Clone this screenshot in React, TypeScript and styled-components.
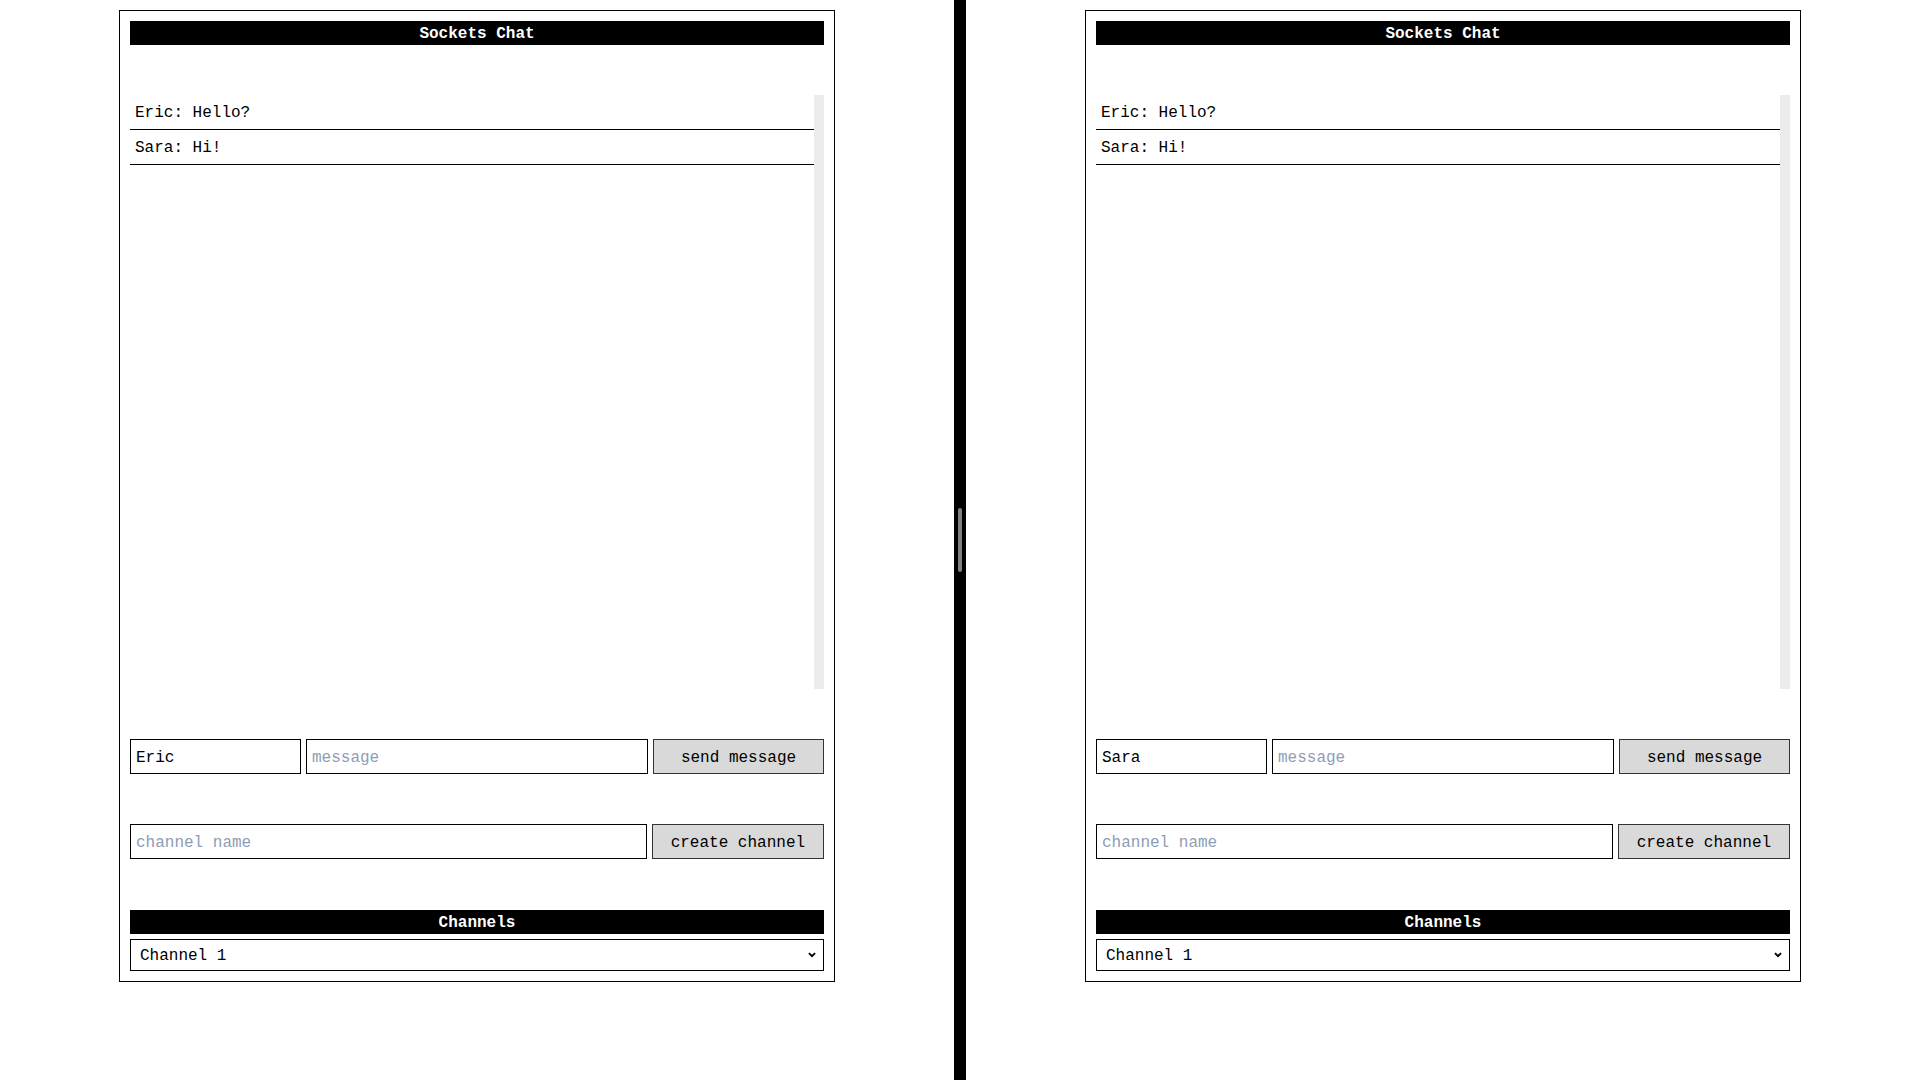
import React, { useState } from 'react';
import styled, { createGlobalStyle } from 'styled-components';

type Message = { user: string; text: string };

const messages: Message[] = [
  { user: 'Eric', text: 'Hello?' },
  { user: 'Sara', text: 'Hi!' },
];

const ChatPanel = ({ name }: { name: string }): JSX.Element => {
  const [message, setMessage] = useState('');
  const [channel, setChannel] = useState('');

  return (
    <Panel>
      <Title>Sockets Chat</Title>
      <MessageArea>
        <MessageList>
          {messages.map((m, i) => (
            <MessageRow key={i}>{`${m.user}: ${m.text}`}</MessageRow>
          ))}
        </MessageList>
        <ScrollTrack />
      </MessageArea>
      <SendRow>
        <TextInput defaultValue={name} />
        <TextInput
          placeholder="message"
          value={message}
          onChange={(e) => setMessage(e.target.value)}
        />
        <Button>send message</Button>
      </SendRow>
      <ChannelRow>
        <TextInput
          placeholder="channel name"
          value={channel}
          onChange={(e) => setChannel(e.target.value)}
        />
        <Button>create channel</Button>
      </ChannelRow>
      <ChannelsSection>
        <Title>Channels</Title>
        <SelectWrapper>
          <Select defaultValue="1">
            <option value="1">Channel 1</option>
          </Select>
          <Chevron viewBox="0 0 10 7">
            <path d="M1.2 1.2l3.8 3.8 3.8-3.8" fill="none" stroke="#000" strokeWidth="2.4" />
          </Chevron>
        </SelectWrapper>
      </ChannelsSection>
    </Panel>
  );
};

const App = (): JSX.Element => {
  return (
    <>
      <GlobalStyle />
      <Page>
        <Pane>
          <ChatPanel name="Eric" />
        </Pane>
        <Divider>
          <Grip />
        </Divider>
        <Pane>
          <ChatPanel name="Sara" />
        </Pane>
      </Page>
    </>
  );
};

const GlobalStyle = createGlobalStyle`
  body {
    margin: 0;
    background: #fff;
    font-family: "Liberation Mono", "Courier New", monospace;
  }
`;

const Page = styled.div`
  display: flex;
  width: 100%;
  height: 100vh;
  overflow: hidden;
`;

const Pane = styled.div`
  flex: 1;
  display: flex;
  justify-content: center;
  align-items: flex-start;
  padding-top: 10px;
`;

const Divider = styled.div`
  width: 12px;
  flex-shrink: 0;
  background: #000;
  display: flex;
  align-items: center;
  justify-content: center;
`;

const Grip = styled.div`
  width: 4px;
  height: 64px;
  border-radius: 2px;
  background: #808080;
`;

const Panel = styled.div`
  width: 716px;
  box-sizing: border-box;
  border: 1px solid #000;
  padding: 10px;
  display: flex;
  flex-direction: column;
  gap: 50px;
  font-size: 16px;
  color: #000;
`;

const Title = styled.div`
  height: 24px;
  box-sizing: border-box;
  padding-top: 2px;
  line-height: 22px;
  background: #000;
  color: #fff;
  font-weight: bold;
  font-size: 16px;
  text-align: center;
`;

const MessageArea = styled.div`
  height: 594px;
  display: grid;
  grid-template-columns: 1fr 10px;
`;

const MessageList = styled.div`
  overflow-y: auto;
`;

const ScrollTrack = styled.div`
  background: #ebebeb;
`;

const MessageRow = styled.div`
  height: 35px;
  box-sizing: border-box;
  display: flex;
  align-items: center;
  padding: 1px 5px 0;
  border-bottom: 1px solid #000;
  font-size: 16px;
`;

const SendRow = styled.div`
  display: grid;
  grid-template-columns: 1fr 2fr 1fr;
  gap: 5px;
`;

const ChannelRow = styled.div`
  display: grid;
  grid-template-columns: 3fr 1fr;
  gap: 5px;
`;

const TextInput = styled.input`
  height: 35px;
  box-sizing: border-box;
  min-width: 0;
  border: 1px solid #000;
  border-radius: 0;
  padding: 3px 5px 0;
  font-family: inherit;
  font-size: 16px;
  color: #000;
  outline: none;

  &::placeholder {
    color: #8e9cb4;
  }
`;

const Button = styled.button`
  height: 35px;
  box-sizing: border-box;
  border: 1px solid #333;
  border-radius: 0;
  background: #d9d9d9;
  padding: 3px 0 0;
  font-family: inherit;
  font-size: 16px;
  color: #000;
  cursor: pointer;
`;

const ChannelsSection = styled.div`
  display: flex;
  flex-direction: column;
  gap: 5px;
  margin-top: 1px;
`;

const SelectWrapper = styled.div`
  position: relative;
`;

const Select = styled.select`
  width: 100%;
  height: 32px;
  box-sizing: border-box;
  appearance: none;
  border: 1px solid #000;
  border-radius: 0;
  background: #fff;
  padding: 1px 9px 0;
  font-family: inherit;
  font-size: 16px;
  color: #000;
  outline: none;
`;

const Chevron = styled.svg`
  position: absolute;
  right: 8px;
  top: 13px;
  width: 8px;
  height: 6px;
  pointer-events: none;
`;

export default App;
